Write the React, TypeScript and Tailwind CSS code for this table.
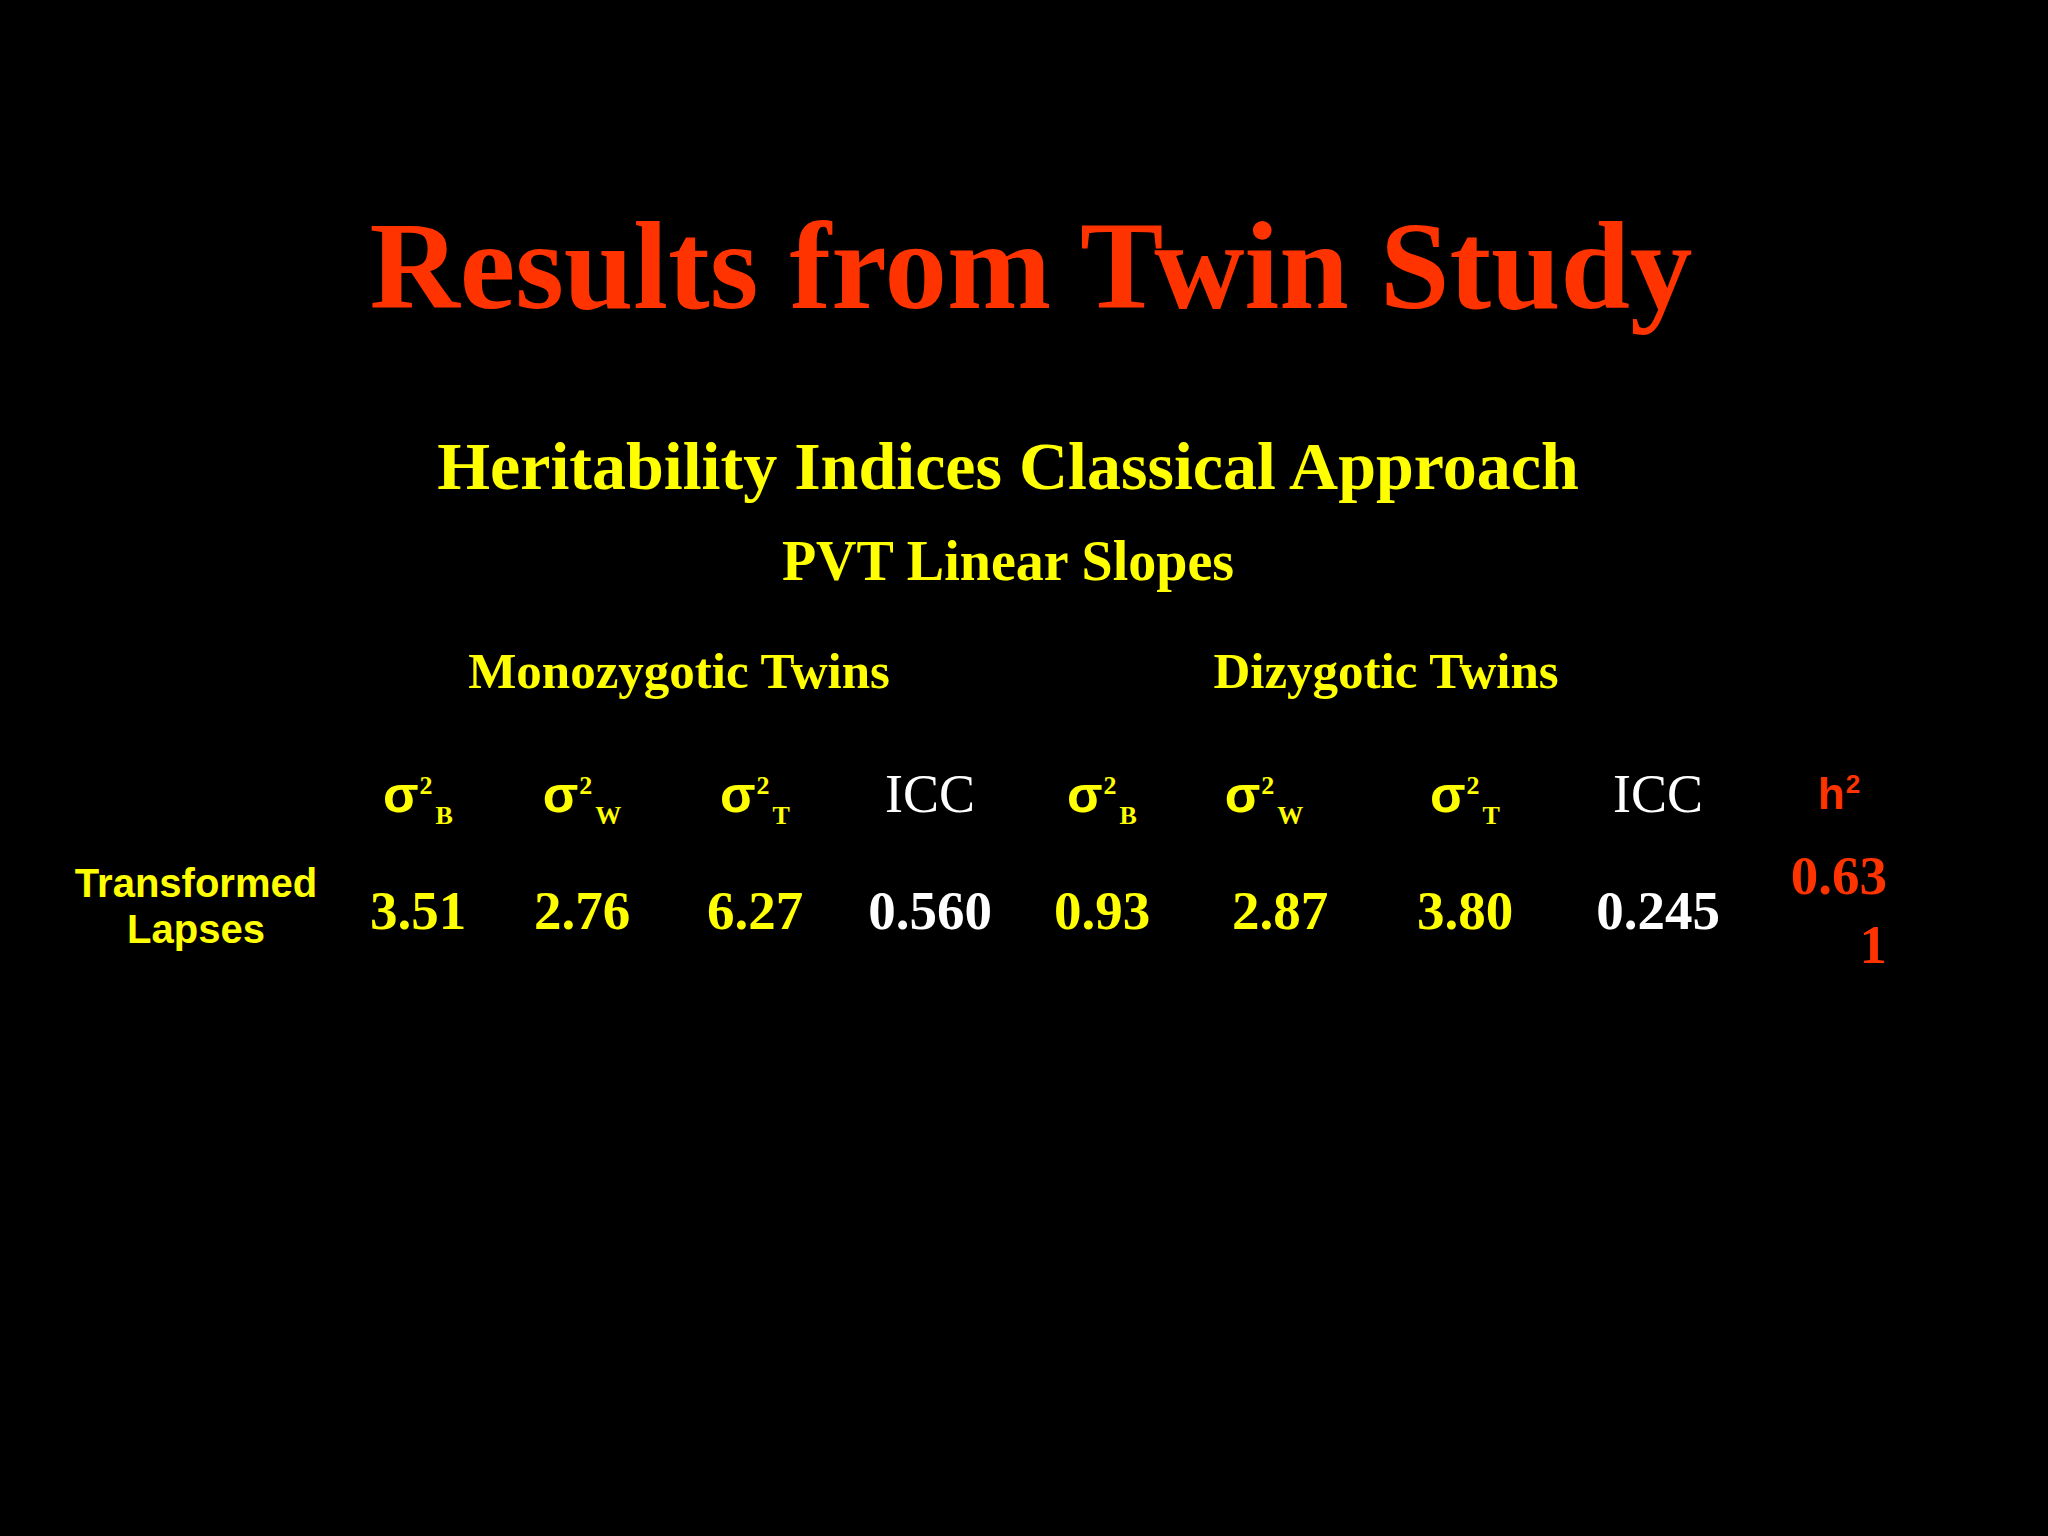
const serif = "font-['Liberation_Serif','Times_New_Roman',serif]";
const sans = "font-['Liberation_Sans',Arial,sans-serif]";
const cols =
  "grid grid-cols-[272px_172px_156px_190px_160px_184px_156px_230px_156px_206px] pl-[60px]";

const Sigma = ({ sub, className = "" }: { sub: string; className?: string }) => (
  <span className={`inline-block whitespace-nowrap text-[#FFFF00] ${className}`}>
    <span className={`${sans} text-[52px] font-bold leading-none`}>σ</span>
    <span className={`${serif} relative -top-[18px] ml-[1px] text-[26px] font-bold leading-none`}>2</span>
    <span className={`${serif} relative top-[12px] ml-[3px] text-[26px] font-bold leading-none`}>{sub}</span>
  </span>
);

const Num = ({ v, white }: { v: string; white?: boolean }) => (
  <span className={`${serif} text-[55px] font-bold leading-none ${white ? "text-white" : "text-[#FFFF00]"}`}>
    {v}
  </span>
);

export default function App() {
  return (
    <div className="w-full h-[1536px] bg-black pt-[196px]">
      <h1 className={`${serif} pl-[14px] text-center text-[125px] font-bold leading-[140px] text-[#FF3300]`}>
        Results from Twin Study
      </h1>

      <h2 className={`${serif} mt-[90px] pr-[32px] text-center text-[68px] font-bold leading-[80px] text-[#FFFF00]`}>
        Heritability Indices Classical Approach
      </h2>
      <h3 className={`${serif} mt-[20px] pr-[32px] text-center text-[56px] font-bold leading-[70px] text-[#FFFF00]`}>
        PVT Linear Slopes
      </h3>

      {/* twin groups */}
      <div className={`${cols} mt-[45px] ${serif} text-[51px] font-bold leading-[60px] text-[#FFFF00]`}>
        <div className="col-start-2 col-span-4 pl-[16px] text-center">Monozygotic Twins</div>
        <div className="col-span-4 pl-[26px] text-center">Dizygotic Twins</div>
      </div>

      {/* column headers */}
      <div className={`${cols} mt-[58px] h-[70px] items-center text-center`}>
        <div />
        <div><Sigma sub="B" /></div>
        <div><Sigma sub="W" /></div>
        <div><Sigma sub="T" /></div>
        <div className={`${serif} text-[54px] leading-none text-white`}>ICC</div>
        <div><Sigma sub="B" /></div>
        <div className="pr-[16px]"><Sigma sub="W" /></div>
        <div><Sigma sub="T" /></div>
        <div className={`${serif} text-[54px] leading-none text-white`}>ICC</div>
        <div className={`${sans} font-bold leading-none text-[#FF3300]`}>
          <span className="text-[44px]">h</span>
          <span className="relative -top-[16px] ml-[1px] text-[26px]">2</span>
        </div>
      </div>

      {/* values */}
      <div className={`${cols} mt-[12px] h-[136px] items-center text-center`}>
        <div className={`${sans} pb-[8px] text-[40px] font-bold leading-[46px] text-[#FFFF00]`}>
          Transformed
          <br />
          Lapses
        </div>
        <div><Num v="3.51" /></div>
        <div><Num v="2.76" /></div>
        <div><Num v="6.27" /></div>
        <div><Num v="0.560" white /></div>
        <div><Num v="0.93" /></div>
        <div className="pl-[16px]"><Num v="2.87" /></div>
        <div><Num v="3.80" /></div>
        <div><Num v="0.245" white /></div>
        <div className={`${serif} pr-[55px] text-right text-[55px] font-bold leading-[69px] text-[#FF3300]`}>
          0.63
          <br />
          1
        </div>
      </div>
    </div>
  );
}
